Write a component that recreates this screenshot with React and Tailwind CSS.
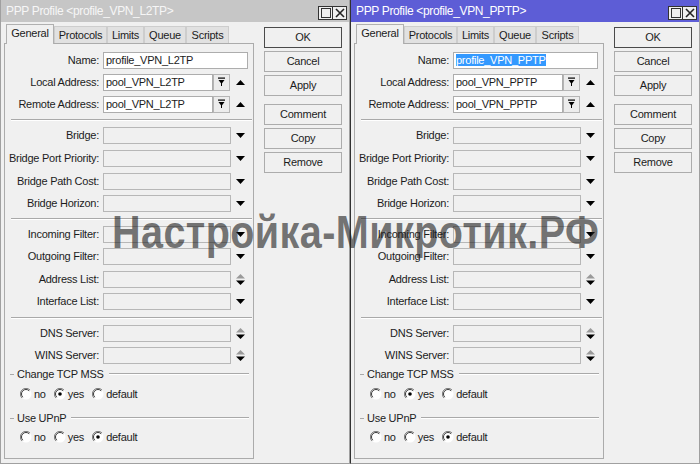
import React from "react";

const DropIcon = () => (
  <svg width="7" height="10" viewBox="0 0 7 10">
    <rect x="0" y="0.5" width="7" height="1.2" fill="#000" />
    <path d="M0.5 3h6L3.5 7z" fill="#000" />
    <rect x="3" y="6" width="1" height="3" fill="#000" />
  </svg>
);

const UpTri = () => (
  <svg width="9" height="5" viewBox="0 0 9 5">
    <path d="M0 5h9L4.5 0z" fill="#000" />
  </svg>
);

const DownTri = () => (
  <svg width="9" height="5" viewBox="0 0 9 5">
    <path d="M0 0h9L4.5 5z" fill="#000" />
  </svg>
);

const UpDown = () => (
  <svg width="9" height="11" viewBox="0 0 9 11">
    <path d="M0 4.5h9L4.5 0z" fill="#9a9a9a" />
    <path d="M0 6.5h9L4.5 11z" fill="#000" />
  </svg>
);

const Radio = ({ checked }) => (
  <svg width="12" height="12" viewBox="0 0 12 12">
    <circle cx="6" cy="6" r="5.5" fill="#fff" />
    <path d="M10 2A5.5 5.5 0 0 0 2 10" stroke="#7a7a7a" strokeWidth="1" fill="none" />
    <path d="M9.2 2.8A4.5 4.5 0 0 0 2.8 9.2" stroke="#3a3a3a" strokeWidth="1" fill="none" />
    {checked && <circle cx="6" cy="6" r="1.8" fill="#000" />}
  </svg>
);

const Label = ({ children }) => (
  <div className="w-[94px] text-right whitespace-nowrap">{children}</div>
);

const Sep = () => (
  <div className="h-[9px] flex flex-col pt-[4px]">
    <div className="ml-[6px] mr-[1px] h-px bg-[#a9a9a9] border-b border-white box-content" />
  </div>
);

const DisabledRow = ({ label, h, icon }) => (
  <div className={`flex items-center ${h}`}>
    <Label>{label}</Label>
    <div className="ml-[4px] h-[17px] w-[128px] border border-[#b7b7b7] bg-[#f0f0f0]" />
    <div className="ml-[5px] flex items-center">{icon === "ud" ? <UpDown /> : <DownTri />}</div>
  </div>
);

const PoolRow = ({ label, value }) => (
  <div className="flex items-center h-[22px]">
    <Label>{label}</Label>
    <div className="ml-[4px] h-[17px] w-[110px] border border-[#adadad] bg-white px-[2px] leading-[15px] whitespace-nowrap">
      {value}
    </div>
    <div className="h-[17px] w-[17px] border border-[#b5b5b5] bg-[#ececec] flex items-center justify-center">
      <DropIcon />
    </div>
    <div className="ml-[6px] flex items-center">
      <UpTri />
    </div>
  </div>
);

const Group = ({ label }) => (
  <div className="flex items-center h-[16px]">
    <div className="ml-[5px] w-[4px] h-px bg-[#a9a9a9]" />
    <div className="ml-[3px] whitespace-nowrap">{label}</div>
    <div className="ml-[5px] mr-[4px] flex-1 h-px bg-[#a9a9a9] border-b border-white box-content" />
  </div>
);

const Radios = ({ sel, h }) => (
  <div className={`flex items-center ${h} pl-[15px]`}>
    {["no", "yes", "default"].map((o, i) => (
      <div key={o} className={`flex items-center ${i > 0 ? "ml-[8px]" : ""}`}>
        <Radio checked={sel === o} />
        <span className="ml-[2px]">{o}</span>
      </div>
    ))}
  </div>
);

const Btn = ({ children, def, extra }) => (
  <div
    className={`h-[21px] w-[78px] flex items-center justify-center bg-[#f0f0f0] border ${
      def ? "border-[#4a4a4a]" : "border-[#acacac]"
    } ${extra || ""}`}
  >
    {children}
  </div>
);

function Window({ title, name, pool, active }) {
  const tabs = [
    ["General", "w-[48px]"],
    ["Protocols", "w-[53px]"],
    ["Limits", "w-[37px]"],
    ["Queue", "w-[42px]"],
    ["Scripts", "w-[43px]"],
  ];
  return (
    <div
      className={`w-[350px] h-[464px] flex flex-col bg-[#f0f0f0] border-l border-r border-b border-r-[#a0a0a0] border-b-[#a0a0a0] ${
        active ? "border-l-[#303030]" : "border-l-[#a0a0a0]"
      }`}
    >
      <div
        className={`h-[22px] flex justify-between pl-[5px] pr-[2px] ${
          active ? "bg-[#5d5dd6] text-white" : "bg-[#c6c6c6] text-[#f6f6f6]"
        }`}
      >
        <div className="pt-[5px] leading-[13px] text-[12px] tracking-[-0.35px] whitespace-nowrap">{title}</div>
        <div className="flex pt-[6px]">
          <div className="w-[15px] h-[14px] border border-[#333] bg-[#efefef] flex items-center justify-center">
            <div className="w-[10px] h-[10px] border border-[#333]" />
          </div>
          <div className="w-[14px] h-[14px] border border-l-0 border-[#333] bg-[#efefef] flex items-center justify-center">
            <svg width="10" height="10" viewBox="0 0 10 10">
              <path d="M1 1L9 9M9 1L1 9" stroke="#222" strokeWidth="1.6" />
            </svg>
          </div>
        </div>
      </div>
      <div className="flex flex-1">
        <div className="ml-[3px] w-[250px] flex flex-col mb-[4px]">
          <div className="flex h-[21px] pl-[2px] items-start">
            {tabs.map(([t, w], i) =>
              i === 0 ? (
                <div
                  key={t}
                  className={`${w} mt-[2px] h-[20px] bg-[#f0f0f0] border border-b-0 border-[#b0b0b0] relative z-10 flex items-center justify-center pb-[2px]`}
                >
                  {t}
                </div>
              ) : (
                <div
                  key={t}
                  className={`${w} mt-[4px] h-[17px] bg-[#e1e1e1] border border-b-0 border-[#cdcdcd] flex items-center justify-center`}
                >
                  {t}
                </div>
              )
            )}
          </div>
          <div className="flex-1 border border-[#ababab] flex flex-col pt-[5px]">
            <div className="flex items-center h-[22px]">
              <Label>Name:</Label>
              <div className="ml-[4px] h-[17px] w-[145px] border border-[#adadad] bg-white px-[2px] leading-[15px] whitespace-nowrap">
                {active ? <span className="bg-[#3399ff] text-white">{name}</span> : name}
              </div>
            </div>
            <PoolRow label="Local Address:" value={pool} />
            <PoolRow label="Remote Address:" value={pool} />
            <Sep />
            <DisabledRow label="Bridge:" h="h-[23px]" />
            <DisabledRow label="Bridge Port Priority:" h="h-[23px]" />
            <DisabledRow label="Bridge Path Cost:" h="h-[22px]" />
            <DisabledRow label="Bridge Horizon:" h="h-[22px]" />
            <Sep />
            <DisabledRow label="Incoming Filter:" h="h-[22px]" />
            <DisabledRow label="Outgoing Filter:" h="h-[23px]" />
            <DisabledRow label="Address List:" h="h-[22px]" icon="ud" />
            <DisabledRow label="Interface List:" h="h-[23px]" />
            <Sep />
            <DisabledRow label="DNS Server:" h="h-[22px]" icon="ud" />
            <DisabledRow label="WINS Server:" h="h-[22px]" icon="ud" />
            <Group label="Change TCP MSS" />
            <Radios sel="yes" h="h-[24px]" />
            <div className="h-[4px]" />
            <Group label="Use UPnP" />
            <Radios sel="default" h="h-[22px]" />
          </div>
        </div>
        <div className="ml-[10px] w-[78px] flex flex-col pt-[5px]">
          <Btn def>OK</Btn>
          <Btn extra="mt-[3px]">Cancel</Btn>
          <Btn extra="mt-[3px]">Apply</Btn>
          <Btn extra="mt-[8px]">Comment</Btn>
          <Btn extra="mt-[3px]">Copy</Btn>
          <Btn extra="mt-[3px]">Remove</Btn>
        </div>
      </div>
    </div>
  );
}

export default function App() {
  return (
    <div className="relative w-[700px] h-[464px] overflow-hidden flex bg-[#f0f0f0] text-[11px] tracking-[-0.25px] text-[#1c1c1c] font-['Liberation_Sans',Arial,sans-serif]">
      <Window title="PPP Profile <profile_VPN_L2TP>" name="profile_VPN_L2TP" pool="pool_VPN_L2TP" />
      <Window title="PPP Profile <profile_VPN_PPTP>" name="profile_VPN_PPTP" pool="pool_VPN_PPTP" active />
      <div className="absolute left-[112px] top-[209px] z-20 pointer-events-none whitespace-nowrap text-[46px] leading-[46px] font-bold tracking-[0.5px] text-[rgba(30,30,30,0.62)] scale-x-[0.86] origin-left">
        Настройка-Микротик.РФ
      </div>
    </div>
  );
}
